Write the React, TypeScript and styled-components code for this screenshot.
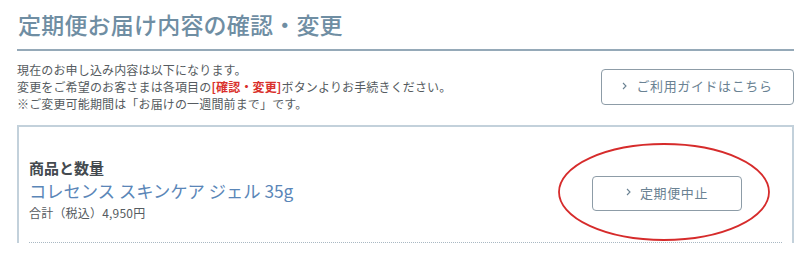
import React from "react";
import styled, { createGlobalStyle } from "styled-components";

const GlobalStyle = createGlobalStyle`
  body {
    margin: 0;
    background: #ffffff;
    font-family: "Noto Sans CJK JP", "Noto Sans", sans-serif;
  }
`;

const Page = styled.div`
  padding: 0 18px 0 17px;
  overflow: hidden;
  height: 267px;
  box-sizing: border-box;
`;

const Title = styled.h1`
  margin: 0;
  padding: 9px 0 10px 1px;
  font-size: 23px;
  line-height: 30px;
  font-weight: 500;
  color: #6f8ea3;
  border-bottom: 2px solid #95a9b8;
  letter-spacing: 0.2px;
`;

const IntroRow = styled.div`
  display: flex;
  justify-content: space-between;
  align-items: center;
  margin-top: 10px;
`;

const IntroText = styled.p`
  margin: 0;
  font-size: 12px;
  line-height: 17px;
  letter-spacing: 0.15px;
  color: #555b60;
`;

const Em = styled.span`
  color: #d9302c;
  font-weight: 700;
`;

const OutlineButton = styled.button<{ $w: number; $h: number }>`
  display: flex;
  align-items: center;
  justify-content: center;
  gap: 9px;
  width: ${(p) => p.$w}px;
  height: ${(p) => p.$h}px;
  padding: 0 0 2px;
  background: #fff;
  border: 1px solid #8d9ca7;
  border-radius: 4px;
  font-family: inherit;
  font-size: 13px;
  letter-spacing: 0.6px;
  color: #6a8293;
  cursor: pointer;
`;

const Box = styled.section`
  margin-top: 13px;
  border: 2px solid #c3d1db;
  border-bottom: none;
  padding: 0 10px;
`;

const ItemRow = styled.div`
  display: flex;
  justify-content: space-between;
  align-items: center;
  padding: 31px 0 20px;
  border-bottom: 1px dotted #a9b8c3;
`;

const ItemInfo = styled.div`
  display: flex;
  flex-direction: column;
`;

const Label = styled.div`
  font-size: 15px;
  line-height: 20px;
  font-weight: 700;
  color: #444a4f;
`;

const ProductName = styled.div`
  font-size: 17.3px;
  line-height: 26px;
  color: #5a86b8;
`;

const Total = styled.div`
  font-size: 12px;
  line-height: 18px;
  letter-spacing: 0.2px;
  color: #555b60;
`;

const ButtonWrap = styled.div`
  position: relative;
  margin: 6px 40px 0 0;
`;

const Annotation = styled.svg`
  position: absolute;
  left: -35px;
  top: -34px;
  width: 214px;
  height: 100px;
  pointer-events: none;
  overflow: visible;
`;

const Chevron = () => (
  <svg width="5" height="8" viewBox="0 0 5 8" fill="none">
    <path d="M1 1l3 3-3 3" stroke="currentColor" strokeWidth="1.1" />
  </svg>
);

export default function App() {
  return (
    <>
      <GlobalStyle />
      <Page>
        <Title>定期便お届け内容の確認・変更</Title>
        <IntroRow>
          <IntroText>
            現在のお申し込み内容は以下になります。
            <br />
            変更をご希望のお客さまは各項目の<Em>[確認・変更]</Em>
            ボタンよりお手続きください。
            <br />
            ※ご変更可能期間は「お届けの一週間前まで」です。
          </IntroText>
          <OutlineButton $w={193} $h={36}>
            <Chevron />
            ご利用ガイドはこちら
          </OutlineButton>
        </IntroRow>
        <Box>
          <ItemRow>
            <ItemInfo>
              <Label>商品と数量</Label>
              <ProductName>コレセンス スキンケア ジェル 35g</ProductName>
              <Total>合計（税込）4,950円</Total>
            </ItemInfo>
            <ButtonWrap>
              <OutlineButton $w={150} $h={35}>
                <Chevron />
                定期便中止
              </OutlineButton>
              <Annotation viewBox="0 0 214 100">
                <ellipse
                  cx="107"
                  cy="50"
                  rx="105"
                  ry="48"
                  fill="none"
                  stroke="#d62b2b"
                  strokeWidth="1.8"
                />
              </Annotation>
            </ButtonWrap>
          </ItemRow>
        </Box>
      </Page>
    </>
  );
}
